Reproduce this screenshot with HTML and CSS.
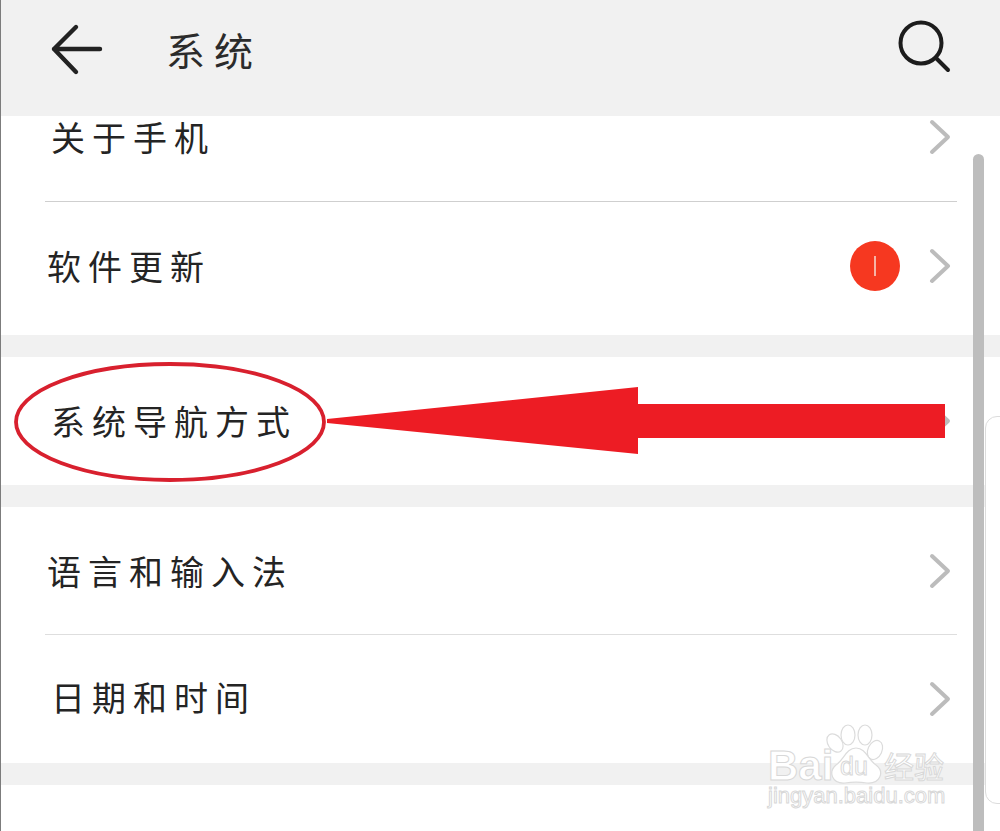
FILE: index.html
```html
<!DOCTYPE html>
<html lang="zh-CN">
<head>
<meta charset="utf-8">
<title>系统</title>
<link rel="stylesheet" href="styles.css">
</head>
<body>
<div class="screen">
  <header class="topbar">
    <svg class="back" width="60" height="60" viewBox="0 0 60 60"><path d="M28 6 L6 28 L28 51 M6 28 H52" fill="none" stroke="#222" stroke-width="4.4" stroke-linecap="round" stroke-linejoin="round"/></svg>
    <h1 class="title">系统</h1>
    <svg class="search" width="60" height="60" viewBox="0 0 60 60"><circle cx="27" cy="25" r="20.5" fill="none" stroke="#1c1c1c" stroke-width="4"/><path d="M42 40 L54 52" fill="none" stroke="#1c1c1c" stroke-width="4" stroke-linecap="round"/></svg>
  </header>

  <main class="list">
    <div class="group">
      <div class="row row-first"><span class="label">关于手机</span><svg class="chev" width="22" height="36" viewBox="0 0 22 36"><path d="M3 3 L19 18 L3 33" fill="none" stroke="#bcbcbc" stroke-width="4" stroke-linecap="round" stroke-linejoin="round"/></svg></div>
      <div class="rule"></div>
      <div class="row row-update"><span class="label label-tight">软件更新</span><span class="badge"><span class="badge-num"></span></span><svg class="chev" width="22" height="36" viewBox="0 0 22 36"><path d="M3 3 L19 18 L3 33" fill="none" stroke="#bcbcbc" stroke-width="4" stroke-linecap="round" stroke-linejoin="round"/></svg></div>
    </div>
    <div class="group">
      <div class="row row-nav"><span class="label">系统导航方式</span><svg class="chev" width="22" height="36" viewBox="0 0 22 36"><path d="M3 3 L19 18 L3 33" fill="none" stroke="#bcbcbc" stroke-width="4" stroke-linecap="round" stroke-linejoin="round"/></svg></div>
    </div>
    <div class="group">
      <div class="row row-lang"><span class="label label-tight">语言和输入法</span><svg class="chev" width="22" height="36" viewBox="0 0 22 36"><path d="M3 3 L19 18 L3 33" fill="none" stroke="#bcbcbc" stroke-width="4" stroke-linecap="round" stroke-linejoin="round"/></svg></div>
      <div class="rule rule-light"></div>
      <div class="row row-date"><span class="label">日期和时间</span><svg class="chev" width="22" height="36" viewBox="0 0 22 36"><path d="M3 3 L19 18 L3 33" fill="none" stroke="#bcbcbc" stroke-width="4" stroke-linecap="round" stroke-linejoin="round"/></svg></div>
    </div>
    <div class="group"></div>
  </main>

  <div class="scrollbar"></div>
  <div class="edge-panel"></div>

  <svg class="annotation" width="1000" height="831" viewBox="0 0 1000 831">
    <ellipse cx="170" cy="422" rx="154" ry="58" fill="none" stroke="#d8202e" stroke-width="3.8"/>
    <polygon points="327,419 638,387 638,404 945,404 945,438 638,438 638,454 327,423" fill="#ed1c24"/>
  </svg>

  <svg class="watermark" width="200" height="110" viewBox="0 0 200 110">
    <g fill="#fff" stroke="#dcdcdc" stroke-width="1.2">
      <ellipse cx="75" cy="21" rx="7" ry="10" transform="rotate(-35 75 21)"/>
      <ellipse cx="88" cy="13" rx="7" ry="10"/>
      <ellipse cx="105" cy="13" rx="7" ry="10"/>
      <ellipse cx="115" cy="28" rx="7" ry="10" transform="rotate(25 115 28)"/>
      <path d="M96 26 C106 26 108 38 116 43 C125 50 120 62 107 61 C100 60 92 60 85 61 C72 62 68 50 76 43 C84 38 86 26 96 26 Z"/>
    </g>
    <g class="wm-text">
      <text x="8" y="58" class="wm-big">Bai</text>
      <text x="80" y="53" class="wm-du">du</text>
      <text x="124" y="56" class="wm-cn">经验</text>
      <text x="8" y="81" class="wm-url">jingyan.baidu.com</text>
    </g>
  </svg>
</div>
</body>
</html>
```
FILE: styles.css
```css
html, body {
  margin: 0;
  padding: 0;
  background: #fff;
}

.screen {
  position: relative;
  width: 1000px;
  height: 831px;
  overflow: hidden;
  box-sizing: border-box;
  border-left: 1px solid #7c7c7c;
  background: #f1f1f1;
  color: #222;
  font-family: "Noto Sans CJK SC", "Noto Sans", sans-serif;
}

.topbar {
  display: flex;
  align-items: center;
  height: 116px;
  padding: 0 46px 20px 47px;
  box-sizing: border-box;
  background: #f1f1f1;
}

.back {
  flex: none;
  margin-top: 5px;
}

.title {
  margin: 2px 0 0 58px;
  font-size: 39px;
  font-weight: 400;
  letter-spacing: 9px;
  line-height: 1;
  color: #2b2b2b;
}

.search {
  flex: none;
  margin-left: auto;
}

.list {
  display: flex;
  flex-direction: column;
  gap: 22px;
}

.group {
  background: #fff;
  min-height: 60px;
}

.row {
  display: flex;
  align-items: center;
  box-sizing: border-box;
  padding: 0 49px 0 50px;
}

.row-first {
  height: 85px;
  padding-bottom: 44px;
}

.row-update {
  height: 133px;
  padding-bottom: 6px;
}

.row-nav {
  height: 128px;
}

.row-lang {
  height: 127px;
}

.row-date {
  height: 128px;
  padding-bottom: 4px;
}

.label {
  font-size: 34px;
  line-height: 40px;
  letter-spacing: 7px;
  font-weight: 400;
  color: #242424;
}

.label-tight {
  margin-left: -4px;
}

.rule {
  height: 1px;
  margin: 0 43px 0 44px;
  background: #cfcfcf;
}

.rule-light {
  background: #dedede;
}

.badge {
  display: flex;
  align-items: center;
  justify-content: center;
  width: 50px;
  height: 50px;
  margin: 0 29px 0 auto;
  border-radius: 50%;
  background: #f63820;
}

.badge-num {
  width: 2px;
  height: 20px;
  background: #f6b3a6;
}

.chev {
  flex: none;
  margin-left: auto;
}

.row-first .chev {
  margin-top: 1px;
}

.row-date .chev {
  margin-top: 4px;
}

.row-update .chev {
  margin-left: 0;
}

.scrollbar {
  position: absolute;
  left: 972px;
  top: 154px;
  width: 11px;
  height: 680px;
  border-radius: 6px 6px 0 0;
  background: #bdbdbd;
}

.edge-panel {
  position: absolute;
  left: 984px;
  top: 416px;
  width: 30px;
  height: 388px;
  box-sizing: border-box;
  border: 1px solid #dcdcdc;
  border-radius: 12px;
  background: #fff;
}

.annotation {
  position: absolute;
  left: -1px;
  top: 0;
}

.watermark {
  position: absolute;
  left: 759px;
  top: 722px;
}

.wm-text text {
  fill: #fff;
  stroke: #d8d8d8;
  stroke-width: 1;
  font-family: "Liberation Sans", sans-serif;
}

.wm-big {
  font-size: 42px;
  font-weight: 700;
}

.wm-du {
  font-size: 25px;
}

.wm-text .wm-cn {
  font-size: 30px;
  font-family: "Noto Sans CJK SC", sans-serif;
}

.wm-url {
  font-size: 22px;
}
```
